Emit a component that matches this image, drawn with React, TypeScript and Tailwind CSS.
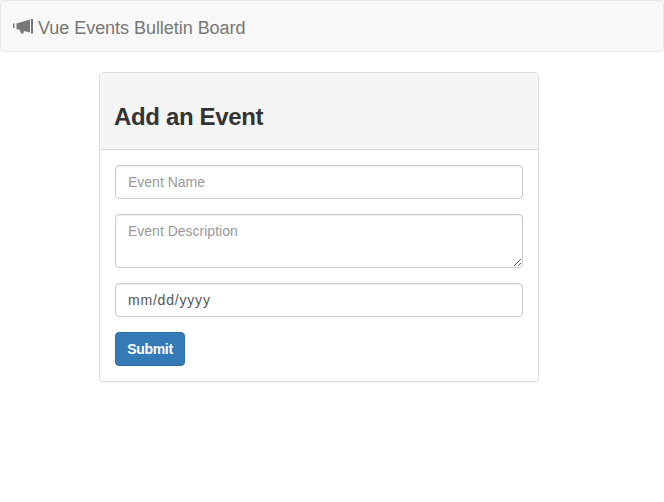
export default function App() {
  const fieldClass =
    "block w-full rounded border border-[#ccc] bg-white px-3 text-[14px] text-[#555] shadow-[inset_0_1px_1px_rgba(0,0,0,0.075)] outline-none placeholder:text-[#999]";

  return (
    <div className="min-h-[502px] bg-white font-['Liberation_Sans',Arial,sans-serif] text-[14px] text-[#333]">
      <nav className="flex h-[52px] items-center rounded border border-[#e7e7e7] bg-[#f8f8f8] pl-[12px] pt-[4px]">
        <svg width="21" height="16" viewBox="0 0 21 16" className="mb-[2px] mr-[4px] text-[#777]" fill="currentColor">
          <rect x="0" y="4.5" width="1.5" height="4.5" />
          <path d="M3.5 4.5 L17 0.5 V13.5 L3.5 10 Z" />
          <path d="M6.5 10 L11 11 L10.5 14.5 L8 14.5 Z" />
          <rect x="18" y="0" width="2" height="14.5" />
        </svg>
        <a className="text-[18px] leading-[20px] tracking-[-0.04px] text-[#777]">Vue Events Bulletin Board</a>
      </nav>

      <div className="ml-[99px] mt-[20px] w-[440px] rounded border border-[#ddd] bg-white shadow-[0_1px_1px_rgba(0,0,0,0.05)]">
        <div className="flex h-[77px] items-end rounded-t-[3px] border-b border-[#ddd] bg-[#f5f5f5] px-[14px] pb-[19px]">
          <h1 className="text-[24px] font-bold leading-[26px] tracking-[-0.35px] text-[#333]">Add an Event</h1>
        </div>
        <form className="flex flex-col gap-[15px] p-[15px]">
          <input className={`${fieldClass} h-[34px]`} placeholder="Event Name" />
          <textarea className={`${fieldClass} h-[54px] py-[6px] leading-[20px]`} placeholder="Event Description" />
          <input className={`${fieldClass} h-[34px] tracking-[0.8px]`} defaultValue="mm/dd/yyyy" />
          <button
            type="button"
            className="h-[34px] w-[70px] rounded border border-[#2e6da4] bg-[#337ab7] text-[14px] font-bold tracking-[-0.3px] text-white"
          >
            Submit
          </button>
        </form>
      </div>
    </div>
  );
}
